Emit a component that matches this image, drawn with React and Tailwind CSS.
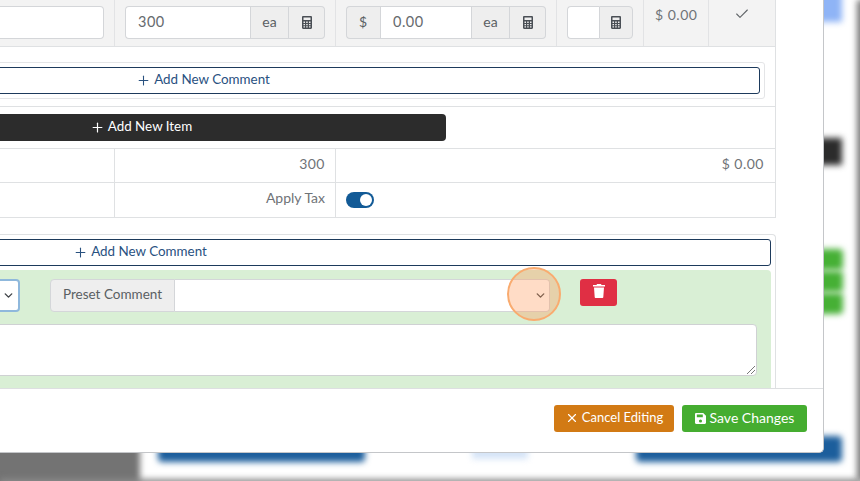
import React from 'react';
import { Plus, Check, X, ChevronDown } from 'lucide-react';

const Calc = () => (
  <svg viewBox="0 0 10 13" className="w-[10px] h-[13px]">
    <path fill="#4a4f55" fillRule="evenodd" d="M1.2 0h7.6C9.5 0 10 .5 10 1.2v10.6c0 .7-.5 1.2-1.2 1.2H1.2C.5 13 0 12.500 0 11.800V1.200C0 .5.500 0 1.200 0zM1.500 1.500v2.500h7V1.500zM1.500 5.500v1.500h1.500V5.500zM4.200 5.500v1.500h1.500V5.500zM7 5.500v1.500h1.500V5.500zM1.500 8v1.300h1.500V8zM4.200 8v1.300h1.500V8zM7 8v1.300h1.500V8zM1.500 10.300v1.300h1.500v-1.300zM4.200 10.300v1.300h1.500v-1.300zM7 10.300v1.300h1.500v-1.300z" />
  </svg>
);

const Addon = ({ children, className = '' }) => (
  <div className={`flex items-center justify-center bg-[#eeeeee] border border-[#d4d6d9] text-[#5a5f63] ${className}`}>
    {children}
  </div>
);

const AddComment = ({ className = '', children }) => (
  <div className={`flex items-center justify-center gap-[3px] h-[27px] pb-[2px] bg-white border border-[#1d3a5c] rounded-[3px] text-[13.4px] text-[#29517f] ${className}`}>
    <Plus className="w-[15px] h-[15px] mt-[1px]" strokeWidth={1.7} />
    <span>{children}</span>
  </div>
);

export default function App() {
  return (
    <div className="relative w-[860px] h-[481px] overflow-hidden bg-white text-[#6f7377] font-['Lato','Open_Sans',sans-serif]">
      {/* blurred page behind the modal */}
      <div className="absolute -left-[10px] top-[445px] w-[150px] h-[45px] bg-[#737373] blur-[3px]" />
      <div className="absolute left-0 top-[479px] w-[860px] h-[8px] bg-[#8b8b8b] blur-[3px]" />
      <div className="absolute left-[857px] top-0 w-[10px] h-[481px] bg-[#777777] blur-[3px]" />
      <div className="absolute left-[815px] -top-[10px] w-[27px] h-[32px] bg-[#8fb4f6] blur-[3px]" />
      <div className="absolute left-[815px] top-[138px] w-[27px] h-[27px] bg-[#2b2b2b] blur-[3px]" />
      <div className="absolute left-[815px] top-[249px] w-[28px] h-[21px] rounded bg-[#46b035] blur-[3px]" />
      <div className="absolute left-[815px] top-[271px] w-[28px] h-[21px] rounded bg-[#46b035] blur-[3px]" />
      <div className="absolute left-[815px] top-[293px] w-[28px] h-[21px] rounded bg-[#46b035] blur-[3px]" />
      <div className="absolute left-[158px] top-[440px] w-[207px] h-[22px] rounded bg-[#1c5e9c] blur-[3px]" />
      <div className="absolute left-[472px] top-[445px] w-[56px] h-[14px] bg-[#d5e4f7] blur-[3px]" />
      <div className="absolute left-[636px] top-[436px] w-[206px] h-[26px] rounded bg-[#1c5e9c] blur-[3px]" />

      {/* modal */}
      <div className="relative flex flex-col w-[824px] h-[453px] bg-white border-r border-b border-[#c4c6c9] rounded-br-[5px]">
        <div className="h-[388px] overflow-hidden pr-[47px]">
          {/* item row */}
          <div className="grid grid-cols-[115px_221px_221px_87px_65px_66px] h-[47px] bg-[#f3f3f3] border-b border-r border-[#dfe1e3]">
            <div className="flex pt-[6px] pr-[10px] h-[46px] border-r border-[#e2e3e5]">
              <div className="w-full h-[33px] bg-white border border-l-0 border-[#d4d6d9] rounded-r-[4px]" />
            </div>
            <div className="flex pt-[6px] px-[10px] h-[46px] border-r border-[#e2e3e5]">
              <div className="flex flex-1 items-center h-[33px] pl-[12px] pb-[1px] bg-white border border-r-0 border-[#d4d6d9] rounded-l-[4px] text-[14.5px] tracking-[0.5px] text-[#666a6e]">300</div>
              <Addon className="w-[39px] h-[33px] pb-[2px] text-[14px]">ea</Addon>
              <Addon className="w-[36px] h-[33px] border-l-0 rounded-r-[4px]"><Calc /></Addon>
            </div>
            <div className="flex pt-[6px] px-[10px] h-[46px] border-r border-[#e2e3e5]">
              <Addon className="w-[34px] h-[33px] pb-[2px] pr-[1px] border-r-0 rounded-l-[4px] text-[14px]">$</Addon>
              <div className="flex flex-1 items-center h-[33px] pl-[12px] pb-[1px] bg-white border border-r-0 border-[#d4d6d9] text-[14.5px] tracking-[0.5px] text-[#666a6e]">0.00</div>
              <Addon className="w-[39px] h-[33px] pb-[2px] text-[14px]">ea</Addon>
              <Addon className="w-[36px] h-[33px] border-l-0 rounded-r-[4px]"><Calc /></Addon>
            </div>
            <div className="flex pt-[6px] px-[10px] h-[46px] border-r border-[#e2e3e5]">
              <div className="flex-1 h-[33px] bg-white border border-r-0 border-[#d4d6d9] rounded-l-[4px]" />
              <Addon className="w-[34px] h-[33px] rounded-r-[4px]"><Calc /></Addon>
            </div>
            <div className="h-[46px] pt-[4px] pl-[11px] border-r border-[#e2e3e5] text-[14px] tracking-[0.5px]">$ 0.00</div>
            <div className="flex justify-center h-[46px] pt-[6px]">
              <Check className="w-[16px] h-[16px] text-[#5f6367]" strokeWidth={1.6} />
            </div>
          </div>

          {/* comment row */}
          <div className="h-[60px] pt-[15px] pr-[10px] border-r border-b border-[#dfe1e3]">
            <div className="h-[37px] -ml-[359px] p-[4px] border border-[#e4e5e7] rounded-[3px]">
              <AddComment className="w-full">Add New Comment</AddComment>
            </div>
          </div>

          {/* add item row */}
          <div className="h-[42px] pt-[7px] border-r border-b border-[#dfe1e3]">
            <div className="flex items-center justify-center gap-[3px] -ml-[164px] w-[610px] h-[27px] pb-[2px] bg-[#2c2c2c] rounded-[4px] text-[13.4px] text-white">
              <Plus className="w-[15px] h-[15px] mt-[1px]" strokeWidth={1.9} />
              <span>Add New Item</span>
            </div>
          </div>

          {/* totals */}
          <div className="grid grid-cols-[115px_221px_1fr] h-[34px] border-r border-b border-[#dfe1e3] text-[14px] tracking-[0.5px] leading-[29px]">
            <div className="border-r border-[#dfe1e3]" />
            <div className="border-r border-[#dfe1e3] text-right pr-[10px]">300</div>
            <div className="text-right pr-[11px]">$ 0.00</div>
          </div>
          <div className="grid grid-cols-[115px_221px_1fr] h-[35px] border-r border-b border-[#dfe1e3] text-[14px]">
            <div className="border-r border-[#dfe1e3]" />
            <div className="border-r border-[#dfe1e3] text-right pr-[10px] pt-[5px] leading-[20px]">Apply Tax</div>
            <div className="flex items-center pl-[10px]">
              <div className="flex items-center justify-end w-[28px] h-[16px] pr-[2px] rounded-full bg-[#125a96]">
                <div className="w-[12px] h-[12px] rounded-full bg-white" />
              </div>
            </div>
          </div>

          {/* comments section */}
          <div className="mt-[16px] h-[160px] pt-[4px] pr-[4px] border-t border-r border-[#dfe1e3] rounded-tr-[4px]">
            <AddComment className="-ml-[491px]">Add New Comment</AddComment>
            <div className="mt-[4px] h-[130px] bg-[#d9efd5] rounded-tr-[4px] pt-[9px]">
              <div className="flex items-start">
                <div className="flex items-center justify-end w-[20px] h-[33px] pr-[3px] bg-white border-2 border-l-0 border-[#8fb8dc] rounded-r-[4px]">
                  <ChevronDown className="w-[13px] h-[13px] text-[#3f4347]" strokeWidth={2.6} />
                </div>
                <div className="flex ml-[30px] w-[500px] h-[33px]">
                  <Addon className="w-[125px] h-[33px] pb-[2px] rounded-l-[4px] text-[13.5px]">Preset Comment</Addon>
                  <div className="flex flex-1 items-center justify-end pr-[2px] bg-white border border-l-0 border-[#d4d6d9] rounded-r-[4px]">
                    <ChevronDown className="w-[13px] h-[13px] text-[#3f4347]" strokeWidth={2.6} />
                  </div>
                </div>
                <div className="flex items-center justify-center ml-[30px] w-[37px] h-[27px] bg-[#e02f44] rounded-[3px]">
                  <svg viewBox="0 0 12 14" className="w-[12px] h-[14px] -mt-[3px]">
                    <path fill="white" d="M4 0h4l.5 1H12v1.500H0V1h3.500zM1 3.500h10l-.7 9.500c0 .6-.5 1-1 1H2.700c-.5 0-1-.4-1-1z" />
                  </svg>
                </div>
              </div>
              <div className="relative mt-[12px] mr-[14px] -ml-[20px] h-[52px] bg-white border border-[#cfd1d3] rounded-[4px]">
                <svg viewBox="0 0 8 8" className="absolute right-[1px] bottom-[1px] w-[8px] h-[8px]">
                  <path stroke="#555" strokeWidth="0.8" d="M0 8L8 0M4 8L8 4" />
                </svg>
              </div>
            </div>
          </div>
        </div>

        {/* footer */}
        <div className="flex items-start justify-end gap-2 h-[64px] pt-[16px] pr-[16px] border-t border-[#dddfe1]">
          <div className="flex items-center justify-center gap-[3px] w-[120px] h-[27px] pb-[1px] bg-[#d27a14] rounded-[3px] text-[13px] text-white">
            <X className="w-[14px] h-[14px]" strokeWidth={2} />
            <span>Cancel Editing</span>
          </div>
          <div className="flex items-center justify-center gap-[4px] w-[125px] h-[27px] pb-[3px] bg-[#45ad30] rounded-[3px] text-[14px] text-white">
            <svg viewBox="0 0 12 12" className="w-[11px] h-[11px] mt-[2px]">
              <path fill="white" fillRule="evenodd" d="M1.300 0H9l3 3v7.700c0 .7-.6 1.300-1.300 1.300H1.300C.6 12 0 11.400 0 10.700V1.300C0 .6.600 0 1.300 0zM2 1.500V4.500h6.500V1.500zM6 7a1.700 1.700 0 1 0 0 3.400A1.700 1.700 0 0 0 6 7z" />
            </svg>
            <span>Save Changes</span>
          </div>
        </div>
      </div>

      {/* click highlight */}
      <div className="absolute left-[507px] top-[267px] w-[54px] h-[54px] rounded-full bg-[#ff9a5c]/35 border-2 border-[#f9ab6f]" />
    </div>
  );
}
